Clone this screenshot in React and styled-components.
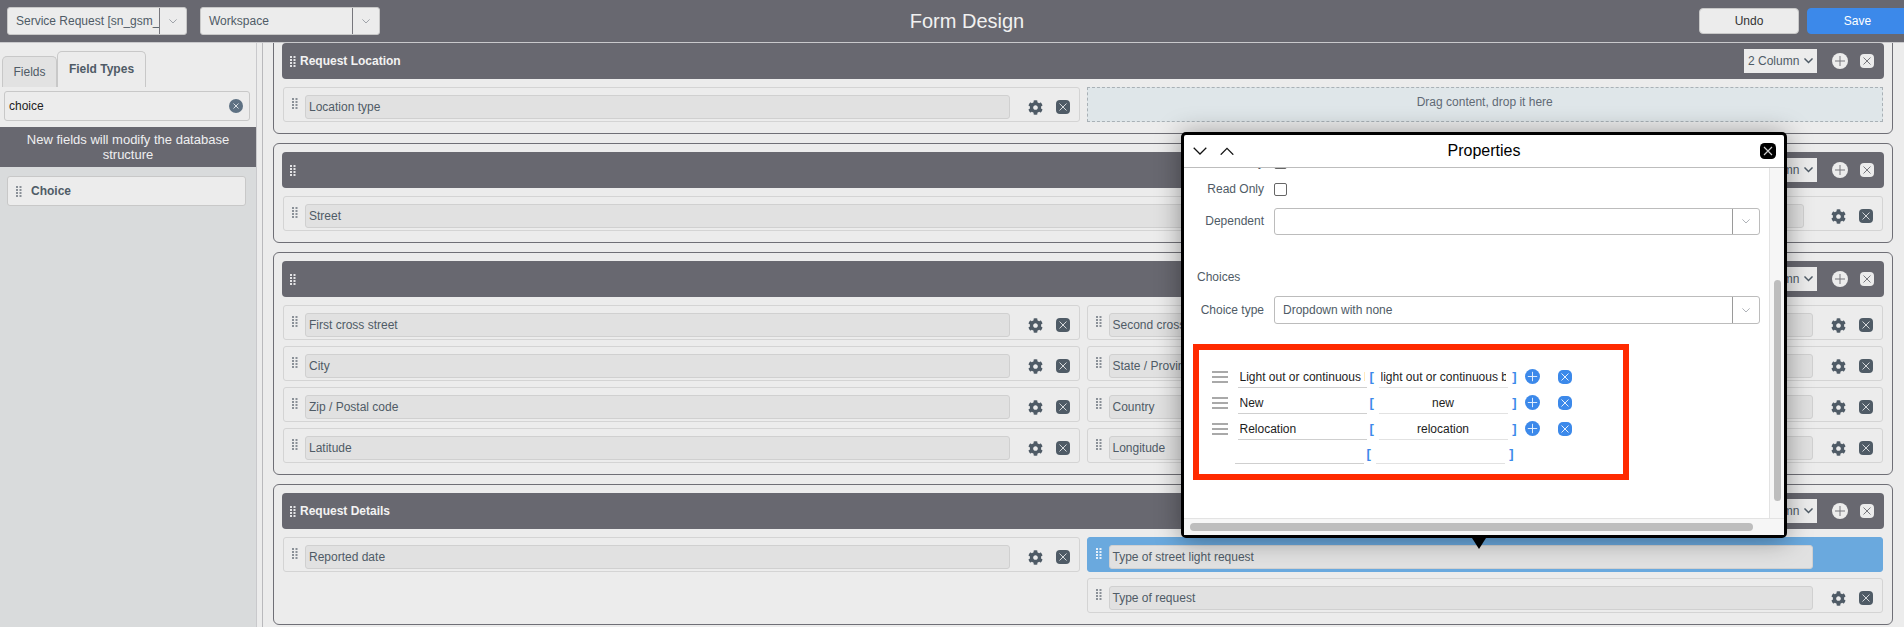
import React from "react";
import styled, { createGlobalStyle } from "styled-components";
import { FaCog } from "react-icons/fa";

const GlobalStyle = createGlobalStyle`
  html, body {
    margin: 0;
    padding: 0;
    height: 100%;
    overflow: hidden;
    background: #ececec;
    font-family: "Liberation Sans", Arial, sans-serif;
  }
  * { box-sizing: border-box; }
`;

const Page = styled.div`
  position: relative;
  width: 1904px;
  height: 627px;
  overflow: hidden;
  display: flex;
  flex-direction: column;
  font-size: 12px;
  color: #4f5b66;
`;

/* top bar */
const TopBar = styled.header`
  flex: 0 0 43px;
  display: grid;
  grid-template-columns: 1fr auto 1fr;
  align-items: start;
  background: #686870;
  border-bottom: 1px solid #c9c9cc;
`;
const Group = styled.div`
  display: flex;
  gap: ${(p) => p.$gap}px;
  padding-top: ${(p) => p.$top}px;
  padding-left: ${(p) => p.$left || 0}px;
  justify-content: ${(p) => p.$end ? "flex-end" : "flex-start"};
`;
const Title = styled.h1`
  margin: 0;
  padding: 10px 0 0 30px;
  font-size: 20px;
  line-height: 23px;
  font-weight: 400;
  color: #f1f1f1;
`;
const TopSelect = styled.div`
  width: 180px;
  height: 28px;
  display: flex;
  background: #ececec;
  border: 1px solid #c8c8c8;
  border-radius: 3px;
`;
const TopSelectText = styled.span`
  flex: 1;
  min-width: 0;
  padding-left: 8px;
  font-size: 12px;
  line-height: 26px;
  white-space: nowrap;
  overflow: hidden;
  color: #4f5b66;
`;
const TopSelectArrow = styled.span`
  flex: 0 0 27px;
  display: flex;
  align-items: center;
  justify-content: center;
  border-left: 1px solid #77777d;
  color: #8b9198;
`;
const Button = styled.button`
  height: 26px;
  width: ${(p) => p.$primary ? "101px" : "100px"};
  margin-right: ${(p) => p.$primary ? "-4px" : "0"};
  padding: 0;
  font: 12px "Liberation Sans", Arial, sans-serif;
  color: ${(p) => p.$primary ? "#fff" : "#333"};
  background: ${(p) => p.$primary ? "#3c89ea" : "#ececec"};
  border: 1px solid ${(p) => p.$primary ? "#3c89ea" : "#c8c8c8"};
  border-radius: 4px;
`;

/* panels */
const Body = styled.div`
  flex: 1;
  min-height: 0;
  display: flex;
`;
const Sidebar = styled.aside`
  flex: 0 0 257px;
  display: flex;
  flex-direction: column;
  border-right: 1px solid #c9c9cc;
`;
const Splitter = styled.div`
  flex: 0 0 6px;
  border-right: 1px solid #b9b9bc;
`;
const Tabs = styled.div`
  display: flex;
  align-items: flex-end;
  height: 44px;
  padding-left: 2px;
`;
const Tab = styled.div`
  width: ${(p) => p.$width}px;
  height: ${(p) => p.$active ? 36 : 31}px;
  text-align: center;
  line-height: ${(p) => p.$active ? 35 : 31}px;
  font-size: 12px;
  font-weight: ${(p) => p.$active ? 700 : 400};
  background: ${(p) => p.$active ? "#ececec" : "#e2e2e2"};
  border: 1px solid #c8c8c8;
  border-bottom: 0;
  border-radius: 5px 5px 0 0;
`;
const Search = styled.div`
  height: 30px;
  margin: 4px 6px 0 4px;
  padding: 0 6px 0 4px;
  display: flex;
  align-items: center;
  justify-content: space-between;
  border: 1px solid #c8c8c8;
  border-radius: 3px;
  font-size: 12px;
  color: #222;
`;
const Banner = styled.div`
  margin-top: 6px;
  height: 40px;
  padding-top: 5px;
  background: #686870;
  color: #efeff0;
  text-align: center;
  font-size: 13px;
  line-height: 15px;
`;
const FieldList = styled.div`
  flex: 1;
  padding: 9px 10px 0 7px;
  background: #d9dbdc;
`;
const TypeCard = styled.div`
  height: 30px;
  display: flex;
  align-items: center;
  gap: 9px;
  padding-left: 8px;
  background: #ececec;
  border: 1px solid #c8c8c8;
  border-radius: 3px;
  font-weight: 700;
`;

const Main = styled.main`
  flex: 1;
  min-width: 0;
  overflow: hidden;
  padding: 0 11px 0 10px;
`;
const Section = styled.section`
  margin: 0 0 9px;
  padding: 8px 8px 11px;
  border: 1px solid #6f6f76;
  border-radius: 6px;
  &:first-child { margin-top: -9px; }
`;
const SectionBar = styled.div`
  height: 36px;
  display: flex;
  align-items: center;
  padding-left: 8px;
  background: #686870;
  border-radius: 4px;
  color: #f3f3f3;
  font-weight: 700;
`;
const SectionTitle = styled.span`
  flex: 1;
  margin-left: 4px;
`;
const ColumnSelect = styled.div`
  width: 73px;
  height: 24px;
  display: flex;
  align-items: center;
  justify-content: space-between;
  padding: 0 4px;
  background: #ececec;
  font-size: 12px;
  font-weight: 400;
  color: #4f5b66;
`;
const BarTools = styled.div`
  display: flex;
  align-items: center;
  gap: 12px;
  margin: 0 10px 0 15px;
`;
const Rows = styled.div`
  display: grid;
  grid-template-columns: 1fr 1fr;
  gap: 6px 7px;
  margin: 8px 1px 0;
`;
const FieldRow = styled.div`
  grid-column: ${(p) => p.$wide ? "1 / -1" : p.$second ? "2" : "auto"};
  height: 35px;
  display: flex;
  align-items: flex-start;
  padding: 7px 9px 0 8px;
  background: ${(p) => p.$selected ? "#6aa9de" : "transparent"};
  border: 1px solid ${(p) => p.$selected ? "#6aa9de" : "#d4d4d4"};
  border-radius: 3px;
  color: ${(p) => p.$selected ? "#eef5fb" : "#4f5b66"};
`;
const GripSlot = styled.span`
  flex: 0 0 13px;
  height: 14px;
  padding-top: 3px;
`;
const FieldName = styled.div`
  flex: 1;
  min-width: 0;
  height: 24px;
  padding-left: 3px;
  line-height: 22px;
  background: #e1e1e1;
  border: 1px solid #d0d0d0;
  border-radius: 3px;
  color: #4f5b66;
`;
const RowTools = styled.div`
  flex: 0 0 ${(p) => p.$wide ? 69 : 60}px;
  height: 24px;
  display: flex;
  align-items: center;
  justify-content: flex-end;
  gap: 13px;
  visibility: ${(p) => p.$hidden ? "hidden" : "visible"};
  color: #4f5b66;
`;
const DropZone = styled.div`
  height: 35px;
  text-align: center;
  line-height: 29px;
  font-size: 12px;
  color: #5f6a75;
  background: #dfe6e9;
  border: 1px dashed #a9b1b6;
`;

/* properties popover */
const Popover = styled.div`
  position: absolute;
  left: 1181px;
  top: 132px;
  width: 606px;
  height: 406px;
  display: flex;
  flex-direction: column;
  background: #fff;
  border: 3px solid #000;
  border-radius: 5px;
  box-shadow: 0 2px 26px rgba(0, 0, 0, 0.38);
  &::after {
    content: "";
    position: absolute;
    left: 288px;
    bottom: -14px;
    border-style: solid;
    border-width: 11px 7px 0;
    border-color: #000 transparent transparent;
  }
`;
const PopoverHead = styled.div`
  flex: 0 0 33px;
  position: relative;
  display: flex;
  align-items: center;
  justify-content: center;
  border-bottom: 1px solid #bdbdbd;
  font-size: 16px;
  color: #000;
`;
const HeadArrows = styled.div`
  position: absolute;
  left: 9px;
  top: 12px;
  display: flex;
  gap: 13px;
  color: #111;
`;
const HeadClose = styled.span`
  position: absolute;
  right: 8px;
  top: 8px;
  display: flex;
`;
const PopoverMiddle = styled.div`
  flex: 1;
  min-height: 0;
  display: flex;
`;
const PopoverContent = styled.div`
  flex: 1;
  min-width: 0;
  overflow: hidden;
`;
const VTrack = styled.div`
  flex: 0 0 15px;
  padding: 112px 3px 0 4px;
  background: #f6f6f6;
  border-left: 1px solid #e3e3e3;
`;
const VThumb = styled.div`
  height: 221px;
  background: #bdbdbd;
  border-radius: 4px;
`;
const HTrack = styled.div`
  flex: 0 0 17px;
  padding: 4px 0 0 6px;
  background: #f6f6f6;
  border-top: 1px solid #e3e3e3;
`;
const HThumb = styled.div`
  width: 563px;
  height: 8px;
  background: #bdbdbd;
  border-radius: 4px;
`;
const FormRow = styled.div`
  display: grid;
  grid-template-columns: 80px 486px;
  column-gap: 10px;
  align-items: center;
  margin-top: ${(p) => p.$top}px;
`;
const FormLabel = styled.label`
  text-align: right;
  color: #4f5b66;
  font-size: 12px;
  line-height: 13px;
`;
const Check = styled.span`
  display: block;
  width: 13px;
  height: 13px;
  border: 1px solid #666;
  border-radius: 2px;
  background: #fff;
`;
const ComboBox = styled.div`
  height: ${(p) => p.$height}px;
  display: flex;
  border: 1px solid #bcbcbc;
  border-radius: 3px;
`;
const ComboText = styled.span`
  flex: 1;
  padding-left: 8px;
  line-height: ${(p) => p.$height - 2}px;
  color: #4f5b66;
`;
const ComboArrow = styled.span`
  flex: 0 0 27px;
  display: flex;
  align-items: center;
  justify-content: center;
  border-left: 1px solid #9a9a9a;
  color: #9aa0a6;
`;
const Heading = styled.div`
  margin: 34px 0 0 13px;
  height: 16px;
  line-height: 16px;
  color: #4f5b66;
`;
const ChoicesBox = styled.div`
  width: 436px;
  height: 136px;
  margin: 20px 0 0 9px;
  padding: 11.5px 0 0 12.5px;
  border: 6.5px solid #ff2a00;
`;
const ChoiceRow = styled.div`
  height: ${(p) => p.$short ? 24 : 26}px;
  padding-top: 4px;
  display: flex;
  align-items: center;
  margin-left: ${(p) => p.$indent || 0}px;
`;
const Handle = styled.span`
  flex: 0 0 26px;
  display: flex;
`;
const ChoiceInput = styled.div`
  flex: 0 0 129px;
  min-width: 0;
  align-self: flex-end;
  height: calc(100% + 4px);
  margin-top: -4px;
  padding: 0 2px;
  line-height: 31px;
  font-size: 12px;
  color: #1d1d1d;
  text-align: ${(p) => p.$center ? "center" : "left"};
  white-space: nowrap;
  overflow: clip;
  overflow-clip-margin: content-box;
  border-bottom: 1px solid ${(p) => p.$light ? "#e2e2e2" : "#cfcfcf"};
`;
const Bracket = styled.span`
  flex: 0 0 12px;
  text-align: ${(p) => p.$close ? "right" : "left"};
  padding: 0 3px;
  color: #3c89ea;
  font-size: 13px;
  font-weight: 700;
`;
const ChoiceTools = styled.div`
  display: flex;
  align-items: center;
  gap: 18px;
  margin-left: 5px;
`;

const Grip = ({ color = "#8a9097", height = 11 }) => (
  <svg width="6" height={height} viewBox="0 0 6 11" fill={color} style={{ display: "block" }}>
    {[0, 3, 6, 9].map((y) => (
      <g key={y}>
        <rect x="0" y={y} width="2" height="2" />
        <rect x="3.5" y={y} width="2" height="2" />
      </g>
    ))}
  </svg>
);

const Chevron = ({ up, size = 10, stroke = 1 }) => (
  <svg width={size} height={size * 0.6} viewBox="0 0 10 6" fill="none" stroke="currentColor" strokeWidth={stroke}>
    <path d={up ? "M.5 5.5 5 1l4.5 4.5" : "M.5.5 5 5 9.5.5"} />
  </svg>
);

const PlusCircle = ({ size = 16, fill, line }) => (
  <svg width={size} height={size} viewBox="0 0 16 16">
    <circle cx="8" cy="8" r="8" fill={fill} />
    <path d="M8 3v10M3 8h10" stroke={line} strokeWidth="1" />
  </svg>
);

const CloseSquare = ({ size = 14, fill, line, radius = 4 }) => (
  <svg width={size} height={size} viewBox="0 0 14 14">
    <rect width="14" height="14" rx={radius} fill={fill} />
    <path d="M3.5 3.5l7 7M10.5 3.5l-7 7" stroke={line} strokeWidth="1" />
  </svg>
);

const HamburgerIcon = () => (
  <svg width="16" height="12" viewBox="0 0 16 12" stroke="#8d8d8d" strokeWidth="1.4">
    <path d="M0 1h16M0 6h16M0 11h16" />
  </svg>
);

const sections = [
  {
    title: "Request Location",
    columns: "2 Column",
    rows: [{ name: "Location type" }, { drop: true }],
  },
  {
    title: "",
    columns: "1 Column",
    rows: [{ name: "Street", wide: true }],
  },
  {
    title: "",
    columns: "2 Column",
    rows: [
      { name: "First cross street" },
      { name: "Second cross street" },
      { name: "City" },
      { name: "State / Province" },
      { name: "Zip / Postal code" },
      { name: "Country" },
      { name: "Latitude" },
      { name: "Longitude" },
    ],
  },
  {
    title: "Request Details",
    columns: "2 Column",
    rows: [
      { name: "Reported date" },
      { name: "Type of street light request", selected: true },
      { name: "Type of request", second: true },
    ],
  },
];

const choices = [
  { label: "Light out or continuous burning", value: "light out or continuous burning", long: true },
  { label: "New", value: "new" },
  { label: "Relocation", value: "relocation" },
];

const Field = ({ name, wide, second, selected }) => (
  <FieldRow $wide={wide} $second={second} $selected={selected}>
    <GripSlot>
      <Grip color={selected ? "#e6f0fa" : "#8a9097"} />
    </GripSlot>
    <FieldName>{name}</FieldName>
    <RowTools $hidden={selected} $wide={wide}>
      <FaCog size={15} />
      <CloseSquare fill="#4f5b66" line="#d5d8db" />
    </RowTools>
  </FieldRow>
);

export default function App() {
  return (
    <Page>
      <GlobalStyle />
      <TopBar>
        <Group $gap={13} $top={7} $left={7}>
          <TopSelect>
            <TopSelectText>Service Request [sn_gsm_request]</TopSelectText>
            <TopSelectArrow>
              <Chevron size={8} />
            </TopSelectArrow>
          </TopSelect>
          <TopSelect>
            <TopSelectText>Workspace</TopSelectText>
            <TopSelectArrow>
              <Chevron size={8} />
            </TopSelectArrow>
          </TopSelect>
        </Group>
        <Title>Form Design</Title>
        <Group $gap={8} $top={8} $end>
          <Button>Undo</Button>
          <Button $primary>Save</Button>
        </Group>
      </TopBar>

      <Body>
        <Sidebar>
          <Tabs>
            <Tab $width={55}>Fields</Tab>
            <Tab $width={89} $active>Field Types</Tab>
          </Tabs>
          <Search>
            choice
            <svg width="14" height="14" viewBox="0 0 14 14">
              <circle cx="7" cy="7" r="7" fill="#5e7183" />
              <path d="M4.5 4.5l5 5M9.5 4.5l-5 5" stroke="#d9dfe4" strokeWidth="1" />
            </svg>
          </Search>
          <Banner>
            New fields will modify the database
            <br />
            structure
          </Banner>
          <FieldList>
            <TypeCard>
              <Grip />
              Choice
            </TypeCard>
          </FieldList>
        </Sidebar>
        <Splitter />

        <Main>
          {sections.map((section, i) => (
            <Section key={i}>
              <SectionBar>
                <Grip color="#e4e4e6" />
                <SectionTitle>{section.title}</SectionTitle>
                <ColumnSelect>
                  {section.columns}
                  <Chevron size={9} stroke={1.6} />
                </ColumnSelect>
                <BarTools>
                  <PlusCircle fill="#ececec" line="#77777d" />
                  <CloseSquare fill="#ececec" line="#77777d" />
                </BarTools>
              </SectionBar>
              <Rows>
                {section.rows.map((row, j) =>
                  row.drop ? (
                    <DropZone key={j}>Drag content, drop it here</DropZone>
                  ) : (
                    <Field key={j} {...row} />
                  )
                )}
              </Rows>
            </Section>
          ))}
        </Main>
      </Body>

      <Popover>
        <PopoverHead>
          <HeadArrows>
            <Chevron size={14} stroke={0.9} />
            <Chevron size={14} stroke={0.9} up />
          </HeadArrows>
          Properties
          <HeadClose>
            <CloseSquare size={16} fill="#000" line="#d0d0d0" />
          </HeadClose>
        </PopoverHead>
        <PopoverMiddle>
          <PopoverContent>
            <FormRow $top={-12}>
              <FormLabel>Mandatory</FormLabel>
              <Check />
            </FormRow>
            <FormRow $top={14}>
              <FormLabel>Read Only</FormLabel>
              <Check />
            </FormRow>
            <FormRow $top={12}>
              <FormLabel>Dependent</FormLabel>
              <ComboBox $height={27}>
                <ComboText $height={27} />
                <ComboArrow>
                  <Chevron size={8} />
                </ComboArrow>
              </ComboBox>
            </FormRow>
            <Heading>Choices</Heading>
            <FormRow $top={11}>
              <FormLabel>Choice type</FormLabel>
              <ComboBox $height={28}>
                <ComboText $height={28}>Dropdown with none</ComboText>
                <ComboArrow>
                  <Chevron size={8} />
                </ComboArrow>
              </ComboBox>
            </FormRow>
            <ChoicesBox>
              {choices.map((choice) => (
                <ChoiceRow key={choice.value}>
                  <Handle>
                    <HamburgerIcon />
                  </Handle>
                  <ChoiceInput>{choice.label}</ChoiceInput>
                  <Bracket>[</Bracket>
                  <ChoiceInput $center={!choice.long} $light>{choice.value}</ChoiceInput>
                  <Bracket $close>]</Bracket>
                  <ChoiceTools>
                    <PlusCircle size={15} fill="#3c89ea" line="#e8f1fd" />
                    <CloseSquare fill="#3c89ea" line="#e8f1fd" radius={5} />
                  </ChoiceTools>
                </ChoiceRow>
              ))}
              <ChoiceRow $indent={23} $short>
                <ChoiceInput />
                <Bracket>[</Bracket>
                <ChoiceInput $light />
                <Bracket $close>]</Bracket>
              </ChoiceRow>
            </ChoicesBox>
          </PopoverContent>
          <VTrack>
            <VThumb />
          </VTrack>
        </PopoverMiddle>
        <HTrack>
          <HThumb />
        </HTrack>
      </Popover>
    </Page>
  );
}
